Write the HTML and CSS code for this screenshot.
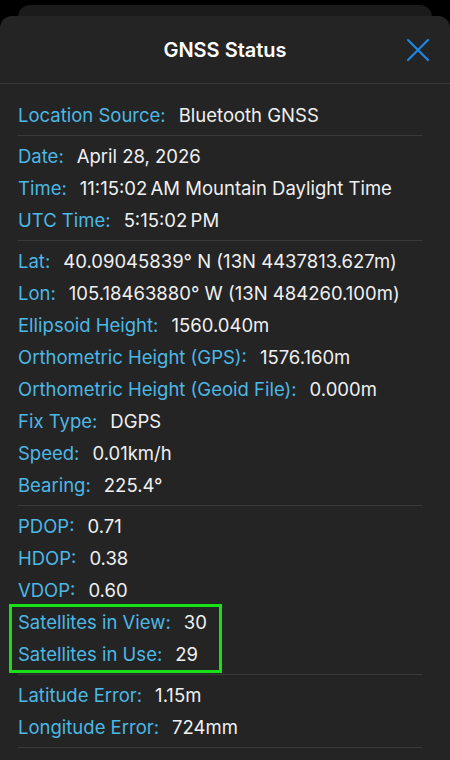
FILE: index.html
```html
<!DOCTYPE html>
<html lang="en">
  <head>
    <meta charset="UTF-8" />
    <meta name="viewport" content="width=device-width, initial-scale=1.0" />
    <title>GNSS Status</title>
    <link rel="stylesheet" href="styles.css">
  </head>
  <body>
    <div class="back-card"></div>
    <div class="sheet">
      <div class="header">
        <h1>GNSS Status</h1>
        <button class="close" aria-label="Close">
          <svg width="24" height="24" viewBox="0 0 24 24">
            <path d="M2 2 L22 22 M22 2 L2 22" stroke="#1e86e6" stroke-width="2.2" stroke-linecap="round" fill="none" />
          </svg>
        </button>
      </div>

      <div class="content">
        <!-- source -->
        <div class="section first">
          <div class="row"><span class="label">Location Source:</span><span class="value">Bluetooth GNSS</span></div>
        </div>

        <!-- time -->
        <div class="section">
          <div class="row"><span class="label">Date:</span><span class="value">April 28, 2026</span></div>
          <div class="row"><span class="label">Time:</span><span class="value">11:15:02&#8239;AM Mountain Daylight Time</span></div>
          <div class="row"><span class="label">UTC Time:</span><span class="value">5:15:02&#8239;PM</span></div>
        </div>

        <!-- position -->
        <div class="section">
          <div class="row"><span class="label">Lat:</span><span class="value">40.09045839° N (13N 4437813.627m)</span></div>
          <div class="row"><span class="label">Lon:</span><span class="value">105.18463880° W (13N 484260.100m)</span></div>
          <div class="row"><span class="label">Ellipsoid Height:</span><span class="value">1560.040m</span></div>
          <div class="row"><span class="label">Orthometric Height (GPS):</span><span class="value">1576.160m</span></div>
          <div class="row"><span class="label">Orthometric Height (Geoid File):</span><span class="value">0.000m</span></div>
          <div class="row"><span class="label">Fix Type:</span><span class="value">DGPS</span></div>
          <div class="row"><span class="label">Speed:</span><span class="value">0.01km/h</span></div>
          <div class="row"><span class="label">Bearing:</span><span class="value">225.4°</span></div>
        </div>

        <!-- precision -->
        <div class="section">
          <div class="row"><span class="label">PDOP:</span><span class="value">0.71</span></div>
          <div class="row"><span class="label">HDOP:</span><span class="value">0.38</span></div>
          <div class="row"><span class="label">VDOP:</span><span class="value">0.60</span></div>
          <div class="highlight">
            <div class="row"><span class="label">Satellites in View:</span><span class="value">30</span></div>
            <div class="row"><span class="label">Satellites in Use:</span><span class="value">29</span></div>
            <div class="highlight-box"></div>
          </div>
        </div>

        <!-- errors -->
        <div class="section">
          <div class="row"><span class="label">Latitude Error:</span><span class="value">1.15m</span></div>
          <div class="row"><span class="label">Longitude Error:</span><span class="value">724mm</span></div>
        </div>
      </div>
    </div>
  </body>
</html>
```

FILE: styles.css
```css
body {
  margin: 0;
  background-color: #000;
  font-family: Inter, "Noto Sans", sans-serif;
  height: 760px;
  overflow: hidden;
  position: relative;
}

.back-card {
  margin: 5px 18px 0;
  height: 40px;
  background-color: #1b1b1b;
  border-radius: 12px 12px 0 0;
}

.sheet {
  position: absolute;
  top: 16px;
  left: 0;
  right: 0;
  bottom: 0;
  background-color: #242424;
  border-radius: 12px 12px 0 0;
}

.header {
  height: 67px;
  display: flex;
  align-items: center;
  justify-content: center;
  border-bottom: 1px solid #363636;
  position: relative;
}

.header h1 {
  margin: 0;
  font-size: 20px;
  font-weight: 600;
  color: #fff;
}

.close {
  position: absolute;
  right: 20px;
  top: 22px;
  background: none;
  border: none;
  padding: 0;
  width: 24px;
  height: 24px;
  cursor: pointer;
}

.content {
  padding: 0 28px 0 18px;
}

.section {
  padding: 4px 0;
  border-bottom: 1px solid #3a3a3a;
}

.section.first {
  padding-top: 15px;
}

.row {
  height: 32px;
  display: flex;
  align-items: center;
  font-size: 18.5px;
  white-space: nowrap;
}

.label {
  color: #4cb8e4;
  margin-right: 13px;
}

.value {
  color: #f0f0f0;
}

.highlight {
  position: relative;
}

.highlight-box {
  position: absolute;
  left: -9px;
  top: -2px;
  width: 207px;
  height: 63px;
  border: 3px solid #18e018;
}
```
